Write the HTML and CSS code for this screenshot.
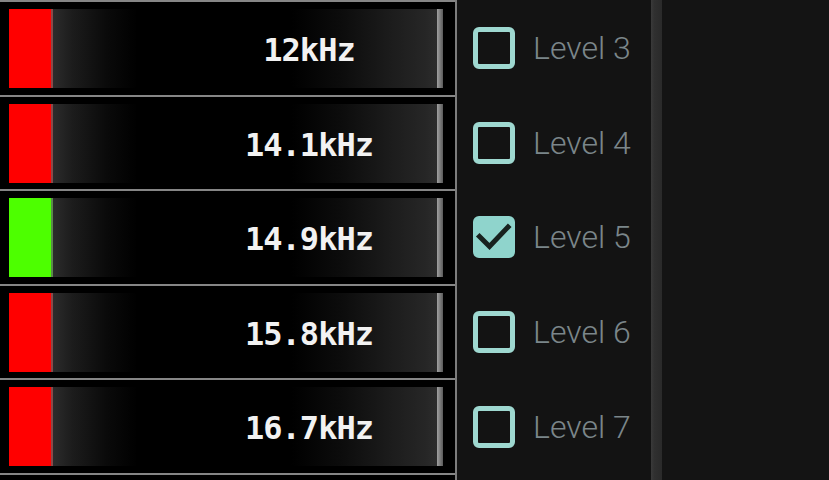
FILE: index.html
```html
<!DOCTYPE html>
<html>
<head>
<meta charset="utf-8">
<link rel="stylesheet" href="styles.css">
</head>
<body>
<div class="screen">
  <div class="freqs">
    <div class="row"><div class="bar"><div class="ind off"></div><div class="track"><span class="val">12kHz</span></div><div class="cap"></div></div></div>
    <div class="row"><div class="bar"><div class="ind off"></div><div class="track"><span class="val">14.1kHz</span></div><div class="cap"></div></div></div>
    <div class="row"><div class="bar"><div class="ind on"></div><div class="track"><span class="val">14.9kHz</span></div><div class="cap"></div></div></div>
    <div class="row"><div class="bar"><div class="ind off"></div><div class="track"><span class="val">15.8kHz</span></div><div class="cap"></div></div></div>
    <div class="row"><div class="bar"><div class="ind off"></div><div class="track"><span class="val">16.7kHz</span></div><div class="cap"></div></div></div>
    <div class="row"></div>
  </div>
  <div class="levels">
    <div class="lrow"><span class="box"></span><span class="label">Level 3</span></div>
    <div class="lrow"><span class="box"></span><span class="label">Level 4</span></div>
    <div class="lrow"><span class="box checked"><svg viewBox="0 0 42 42" width="42" height="42"><path d="M6.5 20.5 L16.5 30.5 L35 11" fill="none" stroke="#18221f" stroke-width="5" stroke-linecap="square"/></svg></span><span class="label">Level 5</span></div>
    <div class="lrow"><span class="box"></span><span class="label">Level 6</span></div>
    <div class="lrow"><span class="box"></span><span class="label">Level 7</span></div>
  </div>
  <div class="divider"></div>
  <div class="rest"></div>
</div>
</body>
</html>
```
FILE: styles.css
```css
html, body {
  margin: 0;
  padding: 0;
  background: #121212;
  overflow: hidden;
}
.screen {
  display: flex;
  width: 829px;
  height: 480px;
  overflow: hidden;
}
.freqs {
  width: 457px;
  flex: none;
  box-sizing: border-box;
  border-right: 2px solid #7c7c7c;
  background: #000;
  height: 480px;
  overflow: hidden;
}
.row {
  box-sizing: border-box;
  height: 94.6px;
  border-top: 2px solid #868686;
  padding: 7px 12px 0 9px;
}
.bar {
  display: flex;
  height: 79px;
}
.ind {
  width: 42px;
  flex: none;
  border-right: 2px solid #8a4a4a;
}
.ind.off { background: #ff0000; }
.ind.on { background: #4dff00; border-right-color: #5c8a4a; }
.track {
  flex: 1;
  display: flex;
  align-items: center;
  justify-content: center;
  padding-left: 128px;
  background: linear-gradient(90deg, #2c2c2c 0%, #1c1c1c 5%, #0a0a0a 14%, #000 22%, #000 62%, #0c0c0c 75%, #1c1c1c 88%, #262626 97%, #2c2c2c 100%);
}
.val {
  font-family: "DejaVu Sans Mono", "Liberation Mono", monospace;
  font-weight: bold;
  font-size: 32px;
  letter-spacing: -1px;
  color: #f2f2f2;
  margin-top: 3px;
}
.cap {
  width: 6px;
  flex: none;
  background: linear-gradient(90deg, #a0a0a0, #5a5a5a);
}
.levels {
  width: 194px;
  flex: none;
  background: #131313;
}
.lrow {
  box-sizing: border-box;
  height: 94.6px;
  padding: 2px 0 0 16px;
  display: flex;
  align-items: center;
  gap: 18px;
}
.box {
  box-sizing: border-box;
  width: 42px;
  height: 42px;
  border: 5px solid #9ed8d0;
  border-radius: 6px;
  flex: none;
  position: relative;
}
.box.checked {
  background: #8fd4cc;
  border-color: #8fd4cc;
}
.box svg {
  position: absolute;
  left: -5px;
  top: -5px;
}
.label {
  font-family: Roboto, "Noto Sans", sans-serif;
  font-weight: 300;
  font-size: 32px;
  color: #7b868a;
}
.divider {
  width: 11px;
  flex: none;
  background: linear-gradient(90deg, #3a3a3a 0%, #303030 30%, #2a2a2a 100%);
}
.rest {
  flex: 1;
  background: #141414;
}
```
